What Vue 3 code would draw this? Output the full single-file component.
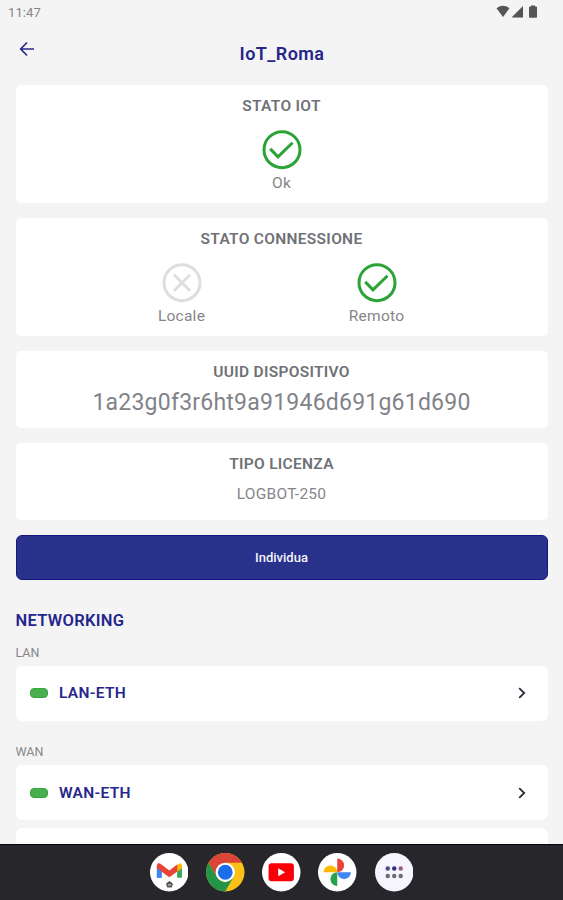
<script setup>
const networks = [
  { group: 'LAN', name: 'LAN-ETH' },
  { group: 'WAN', name: 'WAN-ETH' },
]
const connections = [
  { label: 'Locale', ok: false },
  { label: 'Remoto', ok: true },
]
</script>

<template>
  <div class="screen">
    <div class="status">
      <span class="time">11:47</span>
      <svg class="status-icons" width="44" height="14" viewBox="0 0 44 14">
        <path d="M0.5 3.2Q7 -1.7 13.5 3.2L7 12Z" />
        <path d="M15.5 12.5H27V1Z" />
        <path d="M33 2.4Q33 1.6 34 1.6H35V0.4H39V1.6H40Q41 1.6 41 2.4V12Q41 12.8 40 12.8H34Q33 12.8 33 12Z" />
      </svg>
    </div>
    <header class="header">
      <svg class="back" width="16" height="16" viewBox="0 0 16 16">
        <path d="M8 1.5L1.7 8L8 14.5M1.7 8H15" />
      </svg>
      <h1 class="title">IoT_Roma</h1>
    </header>

    <main class="content">
      <section class="card tall">
        <h2 class="label">STATO IOT</h2>
        <div class="state">
          <svg class="ok" width="40" height="40" viewBox="0 0 40 40">
            <circle cx="20" cy="19.7" r="18" />
            <path d="M8.2 18.9L16 26.9L30.5 12.7" />
          </svg>
          <span class="state-text">Ok</span>
        </div>
      </section>

      <section class="card tall">
        <h2 class="label">STATO CONNESSIONE</h2>
        <div class="pair">
          <div v-for="c in connections" :key="c.label" class="state">
            <svg :class="c.ok ? 'ok' : 'off'" width="40" height="40" viewBox="0 0 40 40">
              <circle cx="20" cy="19.7" r="18" />
              <path v-if="c.ok" d="M8.2 18.9L16 26.9L30.5 12.7" />
              <path v-else d="M12 11.7L28 27.7M28 11.7L12 27.7" />
            </svg>
            <span class="state-text">{{ c.label }}</span>
          </div>
        </div>
      </section>

      <section class="card short">
        <h2 class="label">UUID DISPOSITIVO</h2>
        <p class="uuid">1a23g0f3r6ht9a91946d691g61d690</p>
      </section>

      <section class="card short">
        <h2 class="label">TIPO LICENZA</h2>
        <p class="license">LOGBOT-250</p>
      </section>

      <button class="locate">Individua</button>

      <h2 class="heading">NETWORKING</h2>
      <section v-for="n in networks" :key="n.name" class="group">
        <h3 class="group-name">{{ n.group }}</h3>
        <div class="row">
          <span class="led"></span>
          <span class="row-name">{{ n.name }}</span>
          <svg class="chevron" width="8" height="12" viewBox="0 0 8 12">
            <path d="M1.2 1.2L6.2 6L1.2 10.8" />
          </svg>
        </div>
      </section>
      <div class="row next"></div>
    </main>

    <nav class="dock">
      <svg class="app" viewBox="0 0 38 38">
        <circle cx="19" cy="19" r="19" fill="#fff" />
        <path d="M6.8 12V24.5H11.5V15Z" fill="#4285f4" />
        <path d="M26.8 15V24.5H31.5V12Z" fill="#34a853" />
        <path d="M26.8 12L29 10.3Q31.5 9.5 31.5 13V15L26.8 18.5Z" fill="#fbbc04" />
        <path d="M6.8 13Q6.8 9.2 10 10.3L19.1 17.2L27 11V18.2L19.1 24L6.8 15Z" fill="#ea4335" />
        <path d="M6.8 14.8L11.5 18.4V24.5H6.8Z" fill="#4285f4" />
        <path d="M16 31L16.4 29.5L19.2 27.6L22 29.5L22.4 31L21.5 34H17Z" fill="#555" />
        <path d="M17.6 31.5H20.8" stroke="#ddd" stroke-width="1" />
      </svg>
      <svg class="app" viewBox="0 0 38 38">
        <circle cx="19" cy="19" r="19" fill="#fbc116" />
        <path d="M2.55 9.5A19 19 0 0 1 35.45 9.5H19L10.8 23.8Z" fill="#dc4437" />
        <path d="M2.55 9.5L10.8 23.8Q14 29 20 28.5L27.2 23.8L19 38A19 19 0 0 1 2.55 9.5Z" fill="#229547" />
        <circle cx="19" cy="19" r="9.5" fill="#fff" />
        <circle cx="19" cy="19" r="7.3" fill="#1a6fe8" />
      </svg>
      <svg class="app" viewBox="0 0 38 38">
        <circle cx="19" cy="19" r="19" fill="#fff" />
        <rect x="6.5" y="10" width="25" height="18" rx="3" fill="#f90009" />
        <path d="M16 15V23L22.8 19Z" fill="#fff" />
      </svg>
      <svg class="app" viewBox="0 0 38 38">
        <circle cx="19" cy="19" r="19" fill="#fff" />
        <path d="M19 19V5.5A6.75 6.75 0 0 1 19 19Z" fill="#ea4335" />
        <path d="M19 19H32.5A6.75 6.75 0 0 1 19 19Z" fill="#4285f4" />
        <path d="M19 19V32.5A6.75 6.75 0 0 1 19 19Z" fill="#28a14c" />
        <path d="M19 19H5.5A6.75 6.75 0 0 1 19 19Z" fill="#fbb904" />
      </svg>
      <svg class="app" viewBox="0 0 38 38">
        <circle cx="19" cy="19" r="19" fill="#f6f4fc" />
        <circle cx="12.6" cy="15.3" r="2.2" fill="#4b4a86" />
        <circle cx="19" cy="15.3" r="2.2" fill="#302f83" />
        <circle cx="25.4" cy="15.3" r="2.2" fill="#986078" />
        <circle cx="12.6" cy="22.6" r="2.2" fill="#6d6d76" />
        <circle cx="19" cy="22.6" r="2.2" fill="#6d6d76" />
        <circle cx="25.4" cy="22.6" r="2.2" fill="#6d6d76" />
      </svg>
    </nav>
  </div>
</template>

<style>
body {
  margin: 0;
  background: #f4f4f4;
}
</style>

<style scoped>
.screen {
  width: 563px;
  height: 900px;
  display: flex;
  flex-direction: column;
  overflow: hidden;
  background: #f4f4f4;
  color: #75777c;
  font-family: Roboto, sans-serif;
}
h1, h2, h3, p {
  margin: 0;
}
.status {
  flex: none;
  height: 24px;
  box-sizing: border-box;
  display: flex;
  justify-content: space-between;
  padding: 5px 23px 0 8px;
}
.time {
  font-size: 13px;
  line-height: 15px;
  letter-spacing: 0.1px;
  color: #858585;
}
.status-icons {
  fill: #555;
}
.header {
  flex: none;
  height: 61px;
  box-sizing: border-box;
  display: grid;
  grid-template-columns: 16px 1fr 16px;
  padding: 17px 19px 0;
}
.back {
  fill: none;
  stroke: #29298f;
  stroke-width: 1.7;
}
.title {
  padding: 2px 0 0 1px;
  font-size: 18px;
  line-height: 22px;
  font-weight: 600;
  letter-spacing: 0.45px;
  text-align: center;
  color: #25258c;
}
.content {
  flex: 1;
  min-height: 0;
  overflow: hidden;
  padding: 0 15.5px;
}
.card {
  display: flex;
  flex-direction: column;
  align-items: center;
  box-sizing: border-box;
  margin-bottom: 15px;
  padding-top: 11px;
  border-radius: 5px;
  background: #fff;
}
.tall {
  height: 118px;
}
.short {
  height: 77px;
}
.label {
  font-size: 15.5px;
  line-height: 20px;
  font-weight: 600;
  letter-spacing: 0.3px;
  color: #6f7176;
}
.pair {
  align-self: stretch;
  display: grid;
  grid-template-columns: 195px 195px;
  justify-content: center;
  padding-right: 5px;
}
.state {
  display: flex;
  flex-direction: column;
  align-items: center;
  padding-top: 14px;
}
.state-text {
  margin-top: 2px;
  font-size: 15.5px;
  line-height: 22px;
  letter-spacing: 0.25px;
  color: #85868a;
}
.ok, .off {
  fill: none;
  stroke: #2ba336;
  stroke-width: 3;
}
.off {
  stroke: #dedede;
}
.uuid {
  margin-top: 6px;
  font-size: 23px;
  line-height: 30px;
  letter-spacing: 0.23px;
  color: #818389;
}
.license {
  margin-top: 10px;
  font-size: 15.5px;
  line-height: 20px;
  letter-spacing: 0.25px;
  color: #85868b;
}
.locate {
  display: block;
  width: 100%;
  height: 44.5px;
  padding: 0;
  border: 1px solid #17177f;
  border-radius: 6px;
  background: #28328b;
  color: #f2f2fa;
  font-family: inherit;
  font-size: 13px;
  font-weight: 500;
}
.heading {
  margin-top: 30.5px;
  font-size: 16.5px;
  line-height: 22px;
  font-weight: 600;
  letter-spacing: 0.3px;
  color: #25258c;
}
.group-name {
  height: 16px;
  padding: 13px 0 4.5px;
  font-size: 12.5px;
  line-height: 16px;
  font-weight: 400;
  color: #85868a;
}
.row {
  height: 55.5px;
  box-sizing: border-box;
  display: flex;
  align-items: center;
  padding: 0 22px 0 14.5px;
  border-radius: 6px;
  background: #fff;
}
.group + .group {
  padding-top: 10.3px;
}
.led {
  width: 18px;
  height: 10px;
  box-sizing: border-box;
  border: 1px solid #35a83c;
  border-radius: 4px;
  background: #48ae50;
}
.row-name {
  flex: 1;
  margin-left: 11px;
  font-size: 15.5px;
  font-weight: 600;
  letter-spacing: 0.3px;
  color: #27278b;
}
.chevron {
  fill: none;
  stroke: #2b2b38;
  stroke-width: 1.8;
}
.next {
  margin-top: 7.5px;
}
.dock {
  flex: none;
  height: 56px;
  box-sizing: border-box;
  display: flex;
  justify-content: center;
  gap: 17.7px;
  padding-top: 8px;
  border-top: 1px solid #050507;
  background: #26262b;
}
.app {
  width: 38.5px;
  height: 38.5px;
}
</style>
